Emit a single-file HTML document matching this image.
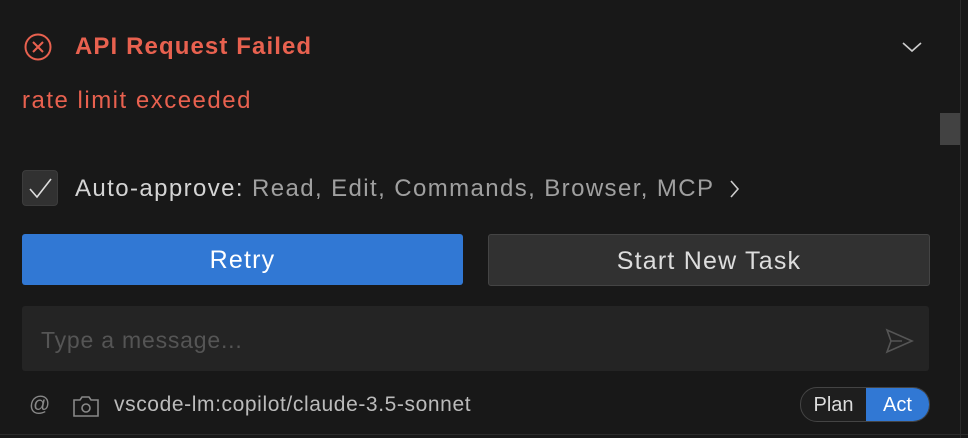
<!DOCTYPE html><html><head><style>
body{margin:0;width:968px;height:438px;background:#181818;font-family:"Liberation Sans",sans-serif;position:relative;overflow:hidden}
.a{position:absolute;white-space:nowrap}
</style></head><body>
<div class="a" style="left:960px;top:0;width:1px;height:438px;background:#2b2b2b"></div>
<div class="a" style="left:0;top:434px;width:968px;height:1px;background:#2b2b2b"></div>
<div class="a" style="left:940px;top:113px;width:20px;height:32px;background:#424242"></div>
<svg class="a" style="left:24px;top:33px" width="28" height="28"><circle cx="14" cy="14" r="12.5" fill="none" stroke="#e8614f" stroke-width="2"/><path d="M9 9L19 19M19 9L9 19" stroke="#e8614f" stroke-width="2"/></svg>
<div class="a" style="left:75px;top:33px;font-size:24px;letter-spacing:1.1px;font-weight:bold;color:#e8614f">API Request Failed</div>
<svg class="a" style="left:901px;top:40px" width="22" height="14"><path d="M2 3L11 11L20 3" fill="none" stroke="#ccc" stroke-width="1.6"/></svg>
<div class="a" style="left:22px;top:87px;font-size:24px;letter-spacing:1.5px;color:#e8614f">rate limit exceeded</div>
<div class="a" style="left:22px;top:170px;width:34px;height:34px;background:#313131;border:1px solid #3c3c3c;border-radius:4px"></div>
<svg class="a" style="left:22px;top:170px" width="36" height="36"><path d="M8 19L15 27L29 9" fill="none" stroke="#ddd" stroke-width="1.6"/></svg>
<div class="a" style="left:75px;top:175px;font-size:24px;letter-spacing:1.4px;color:#d4d4d4">Auto-approve: <span style="color:#a0a0a0">Read, Edit, Commands, Browser, MCP</span></div>
<svg class="a" style="left:728px;top:179px" width="14" height="20"><path d="M3 2L10 10L3 18" fill="none" stroke="#ccc" stroke-width="1.6"/></svg>
<div class="a" style="left:22px;top:234px;width:441px;height:51px;background:#3178d4;border-radius:3px;color:#fff;font-size:25px;letter-spacing:1.2px;line-height:53px;text-align:center">Retry</div>
<div class="a" style="left:488px;top:234px;width:440px;height:50px;background:#313131;border:1px solid #444;border-radius:3px;color:#ddd;font-size:25px;letter-spacing:1.2px;line-height:53px;text-align:center">Start New Task</div>
<div class="a" style="left:22px;top:306px;width:907px;height:65px;background:#242424;border-radius:3px"></div>
<div class="a" style="left:41px;top:327px;font-size:23px;letter-spacing:0.8px;color:#555">Type a message...</div>
<svg class="a" style="left:884px;top:327px" width="30" height="28"><path d="M3 3L28 14L3 25L7 14Z M7 14H18" fill="none" stroke="#555" stroke-width="1.6"/></svg>
<div class="a" style="left:29px;top:393px;font-size:21px;color:#888">@</div>
<svg class="a" style="left:72px;top:395px" width="28" height="22"><path d="M2 5H8L10 2H17L19 5H26V21H2Z" fill="none" stroke="#888" stroke-width="1.6"/><circle cx="14" cy="13" r="4" fill="none" stroke="#888" stroke-width="1.6"/></svg>
<div class="a" style="left:114px;top:393px;font-size:21px;letter-spacing:0.6px;color:#bbb">vscode-lm:copilot/claude-3.5-sonnet</div>
<div class="a" style="left:800px;top:387px;width:128px;height:33px;border:1px solid #444;border-radius:17px;overflow:hidden;background:#1e1e1e">
<div class="a" style="left:0;top:0;width:65px;height:33px;color:#ddd;font-size:20px;line-height:35px;text-align:center">Plan</div>
<div class="a" style="left:65px;top:0;width:63px;height:33px;background:#3178d4;color:#fff;font-size:20px;line-height:35px;text-align:center">Act</div>
</div>
</body></html>
